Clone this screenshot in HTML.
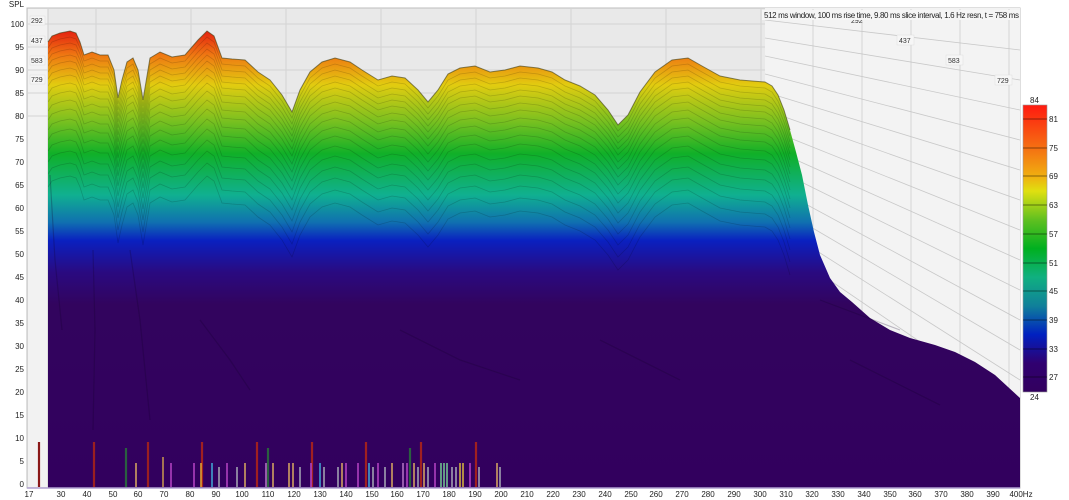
<!DOCTYPE html>
<html><head><meta charset="utf-8"><style>
html,body{margin:0;padding:0;background:#fff;}
svg{display:block;font-family:"Liberation Sans",sans-serif;}
</style></head><body>
<svg width="1069" height="500" viewBox="0 0 1069 500" xmlns="http://www.w3.org/2000/svg">
<defs>
<linearGradient id="sg" gradientUnits="userSpaceOnUse" x1="0" y1="30" x2="0" y2="488">
<stop offset="0" stop-color="#e41e10"/>
<stop offset="0.055" stop-color="#ef7812"/>
<stop offset="0.12" stop-color="#e2cc10"/>
<stop offset="0.2" stop-color="#78c020"/>
<stop offset="0.27" stop-color="#10b028"/>
<stop offset="0.36" stop-color="#10b090"/>
<stop offset="0.42" stop-color="#1070b0"/>
<stop offset="0.46" stop-color="#0a20c0"/>
<stop offset="0.53" stop-color="#2a0a80"/>
<stop offset="0.6" stop-color="#32045e"/>
<stop offset="1" stop-color="#32005e"/>
</linearGradient>
<linearGradient id="cb" x1="0" y1="0" x2="0" y2="1">
<stop offset="0" stop-color="#ff1a10"/>
<stop offset="0.15" stop-color="#f57012"/>
<stop offset="0.25" stop-color="#f0b010"/>
<stop offset="0.3" stop-color="#e0e010"/>
<stop offset="0.4" stop-color="#60c020"/>
<stop offset="0.5" stop-color="#00b020"/>
<stop offset="0.6" stop-color="#10b080"/>
<stop offset="0.7" stop-color="#10809a"/>
<stop offset="0.8" stop-color="#0020c0"/>
<stop offset="0.9" stop-color="#300070"/>
<stop offset="1" stop-color="#32005e"/>
</linearGradient>
<polyline id="sl" points="48,42 52,36 60,33 70,31 76,33 80,42 84,55 92,52 100,55 108,55 114,70 118,98 122,80 127,62 133,58 138,70 143,100 146,82 150,58 160,52 172,57 185,55 198,40 207,31 214,36 222,58 232,59 245,60 258,72 270,80 282,95 292,112 300,90 310,72 322,62 335,58 350,62 362,70 378,80 392,76 405,78 418,90 428,102 438,90 448,74 460,68 475,66 490,72 505,70 520,66 538,68 552,72 565,80 580,86 595,95 608,110 618,125 628,115 640,92 655,72 672,60 688,58 702,66 720,76 740,80 765,82 772,86 778,95 784,110 790,130"/>
<clipPath id="surf"><polygon points="48,42 52,36 60,33 70,31 76,33 80,42 84,55 92,52 100,55 108,55 114,70 118,98 122,80 127,62 133,58 138,70 143,100 146,82 150,58 160,52 172,57 185,55 198,40 207,31 214,36 222,58 232,59 245,60 258,72 270,80 282,95 292,112 300,90 310,72 322,62 335,58 350,62 362,70 378,80 392,76 405,78 418,90 428,102 438,90 448,74 460,68 475,66 490,72 505,70 520,66 538,68 552,72 565,80 580,86 595,95 608,110 618,125 628,115 640,92 655,72 672,60 688,58 702,66 720,76 740,80 765,82 772,86 778,95 784,110 790,130 796,152 802,175 808,205 814,232 820,255 830,278 840,292 852,302 870,318 890,330 910,338 935,345 955,352 975,362 995,375 1020,398 1020,488 48,488"/></clipPath>
</defs>
<rect width="1069" height="500" fill="#fff"/>
<rect x="27" y="8" width="993" height="480" fill="#e9e9e9" stroke="#bdbdbd"/>
<polygon points="765,8 1020,8 1020,488 765,488" fill="#f3f3f3"/>
<rect x="28" y="9" width="20" height="478" fill="#f2f2f2"/>
<g stroke="#d4d4d4" stroke-width="1">
<line x1="28" y1="24" x2="765" y2="24"/><line x1="28" y1="47" x2="765" y2="47"/><line x1="28" y1="70" x2="765" y2="70"/><line x1="28" y1="93" x2="765" y2="93"/><line x1="28" y1="116" x2="765" y2="116"/>
<line x1="96" y1="9" x2="96" y2="487"/><line x1="191" y1="9" x2="191" y2="487"/><line x1="286" y1="9" x2="286" y2="487"/><line x1="381" y1="9" x2="381" y2="487"/><line x1="476" y1="9" x2="476" y2="487"/><line x1="571" y1="9" x2="571" y2="487"/><line x1="666" y1="9" x2="666" y2="487"/><line x1="761" y1="9" x2="761" y2="487"/>
<line x1="813" y1="9" x2="813" y2="487"/><line x1="862" y1="9" x2="862" y2="487"/><line x1="911" y1="9" x2="911" y2="487"/><line x1="960" y1="9" x2="960" y2="487"/><line x1="1009" y1="9" x2="1009" y2="487"/>
</g>
<g stroke="#c8c8c8" stroke-width="0.8">
<line x1="765" y1="20" x2="1020" y2="50"/><line x1="765" y1="38" x2="1020" y2="80"/><line x1="765" y1="56" x2="1020" y2="110"/><line x1="765" y1="74" x2="1020" y2="140"/><line x1="765" y1="92" x2="1020" y2="170"/><line x1="765" y1="110" x2="1020" y2="200"/><line x1="765" y1="128" x2="1020" y2="230"/><line x1="765" y1="146" x2="1020" y2="260"/><line x1="765" y1="164" x2="1020" y2="290"/><line x1="765" y1="182" x2="1020" y2="320"/><line x1="765" y1="200" x2="1020" y2="350"/><line x1="765" y1="218" x2="1020" y2="380"/><line x1="765" y1="236" x2="1020" y2="410"/><line x1="765" y1="254" x2="1020" y2="440"/><line x1="765" y1="272" x2="1020" y2="470"/>
</g>
<line x1="48" y1="9" x2="48" y2="487" stroke="#cfcfcf"/>
<rect x="48" y="20" width="972" height="468" fill="url(#sg)" clip-path="url(#surf)"/>
<g clip-path="url(#surf)" fill="none" stroke="#000" stroke-opacity="0.16" stroke-width="0.8">
<use href="#sl" transform="translate(0,6)"/><use href="#sl" transform="translate(0,12)"/><use href="#sl" transform="translate(0,18)"/><use href="#sl" transform="translate(0,24)"/><use href="#sl" transform="translate(0,30)"/><use href="#sl" transform="translate(0,37)"/><use href="#sl" transform="translate(0,44)"/><use href="#sl" transform="translate(0,52)"/><use href="#sl" transform="translate(0,60)"/><use href="#sl" transform="translate(0,69)"/><use href="#sl" transform="translate(0,78)"/><use href="#sl" transform="translate(0,88)"/><use href="#sl" transform="translate(0,98)"/><use href="#sl" transform="translate(0,109)"/><use href="#sl" transform="translate(0,120)"/><use href="#sl" transform="translate(0,132)"/><use href="#sl" transform="translate(0,145)"/>
</g>
<use href="#sl" fill="none" stroke="#3a3a10" stroke-opacity="0.6" stroke-width="1"/>
<g stroke="#12002a" stroke-opacity="0.25" stroke-width="1.2" fill="none">
<path d="M50,175 L55,260 L62,330"/><path d="M93,250 L95,330 L93,430"/><path d="M130,250 L140,320 L150,420"/><path d="M200,320 L230,360 L250,390"/><path d="M400,330 L460,360 L520,380"/><path d="M600,340 L680,380"/><path d="M820,300 L900,330"/><path d="M850,360 L940,405"/>
</g>
<g stroke-width="2.2">
<line x1="39" y1="442" x2="39" y2="487" stroke="#8a1818"/>
<line x1="94" y1="442" x2="94" y2="487" stroke="#9a2020"/><line x1="148" y1="442" x2="148" y2="487" stroke="#9a2020"/><line x1="202" y1="442" x2="202" y2="487" stroke="#a02020"/><line x1="257" y1="442" x2="257" y2="487" stroke="#a02020"/><line x1="312" y1="442" x2="312" y2="487" stroke="#a02020"/><line x1="366" y1="442" x2="366" y2="487" stroke="#a02020"/><line x1="421" y1="442" x2="421" y2="487" stroke="#a02020"/><line x1="476" y1="442" x2="476" y2="487" stroke="#a02020"/>
<line x1="126" y1="448" x2="126" y2="487" stroke="#2a6040"/><line x1="268" y1="448" x2="268" y2="487" stroke="#2a6040"/><line x1="410" y1="448" x2="410" y2="487" stroke="#2a6040"/>
</g>
<g stroke-width="1.6">
<line x1="136" y1="463" x2="136" y2="487" stroke="#d0a060"/><line x1="163" y1="457" x2="163" y2="487" stroke="#c09050"/><line x1="171" y1="463" x2="171" y2="487" stroke="#b040c0"/><line x1="194" y1="463" x2="194" y2="487" stroke="#b040c0"/><line x1="201" y1="463" x2="201" y2="487" stroke="#e0a030"/><line x1="212" y1="463" x2="212" y2="487" stroke="#40a0d0"/><line x1="219" y1="467" x2="219" y2="487" stroke="#a0a0b0"/><line x1="227" y1="463" x2="227" y2="487" stroke="#b040c0"/><line x1="237" y1="467" x2="237" y2="487" stroke="#a0a0b0"/><line x1="245" y1="463" x2="245" y2="487" stroke="#d0a060"/><line x1="266" y1="463" x2="266" y2="487" stroke="#b070c0"/><line x1="273" y1="463" x2="273" y2="487" stroke="#d0a060"/><line x1="289" y1="463" x2="289" y2="487" stroke="#d0a060"/><line x1="293" y1="463" x2="293" y2="487" stroke="#d0a060"/><line x1="300" y1="467" x2="300" y2="487" stroke="#a0a0b0"/><line x1="311" y1="463" x2="311" y2="487" stroke="#b040c0"/><line x1="320" y1="463" x2="320" y2="487" stroke="#40a0d0"/><line x1="324" y1="467" x2="324" y2="487" stroke="#a0a0b0"/><line x1="338" y1="467" x2="338" y2="487" stroke="#a0a0b0"/><line x1="342" y1="463" x2="342" y2="487" stroke="#d0a060"/><line x1="346" y1="463" x2="346" y2="487" stroke="#b040c0"/><line x1="358" y1="463" x2="358" y2="487" stroke="#b040c0"/><line x1="369" y1="463" x2="369" y2="487" stroke="#40a0d0"/><line x1="373" y1="467" x2="373" y2="487" stroke="#a0a0b0"/><line x1="378" y1="463" x2="378" y2="487" stroke="#b040c0"/><line x1="385" y1="467" x2="385" y2="487" stroke="#a0a0b0"/><line x1="392" y1="463" x2="392" y2="487" stroke="#d0a060"/><line x1="403" y1="463" x2="403" y2="487" stroke="#b070c0"/><line x1="407" y1="463" x2="407" y2="487" stroke="#b040c0"/><line x1="414" y1="463" x2="414" y2="487" stroke="#d0a060"/><line x1="418" y1="467" x2="418" y2="487" stroke="#a0a0b0"/><line x1="424" y1="463" x2="424" y2="487" stroke="#d0a060"/><line x1="428" y1="467" x2="428" y2="487" stroke="#a0a0b0"/><line x1="435" y1="463" x2="435" y2="487" stroke="#b040c0"/><line x1="441" y1="463" x2="441" y2="487" stroke="#70c090"/><line x1="444" y1="463" x2="444" y2="487" stroke="#70c090"/><line x1="447" y1="463" x2="447" y2="487" stroke="#70c090"/><line x1="452" y1="467" x2="452" y2="487" stroke="#a0a0b0"/><line x1="456" y1="467" x2="456" y2="487" stroke="#a0a0b0"/><line x1="460" y1="463" x2="460" y2="487" stroke="#d0b040"/><line x1="463" y1="463" x2="463" y2="487" stroke="#d0b040"/><line x1="470" y1="463" x2="470" y2="487" stroke="#b040c0"/><line x1="479" y1="467" x2="479" y2="487" stroke="#a0a0b0"/><line x1="497" y1="463" x2="497" y2="487" stroke="#d0a060"/><line x1="500" y1="467" x2="500" y2="487" stroke="#a0a0b0"/>
</g>
<line x1="27" y1="488" x2="1020" y2="488" stroke="#b0a0d0" stroke-width="1.5"/>
<g font-size="8" fill="#222" text-anchor="end">
<text x="24" y="7">SPL</text>
<text x="24" y="27">100</text><text x="24" y="50">95</text><text x="24" y="73">90</text><text x="24" y="96">85</text><text x="24" y="119">80</text><text x="24" y="142">75</text><text x="24" y="165">70</text><text x="24" y="188">65</text><text x="24" y="211">60</text><text x="24" y="234">55</text><text x="24" y="257">50</text><text x="24" y="280">45</text><text x="24" y="303">40</text><text x="24" y="326">35</text><text x="24" y="349">30</text><text x="24" y="372">25</text><text x="24" y="395">20</text><text x="24" y="418">15</text><text x="24" y="441">10</text><text x="24" y="464">5</text><text x="24" y="487">0</text>
</g>
<g font-size="7" fill="#333">
<rect x="30" y="16" width="15" height="9" fill="#f6f6f6" stroke="#ddd" stroke-width="0.5"/><text x="31" y="23">292</text>
<rect x="30" y="36" width="15" height="9" fill="#f6f6f6" stroke="#ddd" stroke-width="0.5"/><text x="31" y="43">437</text>
<rect x="30" y="56" width="15" height="9" fill="#f6f6f6" stroke="#ddd" stroke-width="0.5"/><text x="31" y="63">583</text>
<rect x="30" y="75" width="15" height="9" fill="#f6f6f6" stroke="#ddd" stroke-width="0.5"/><text x="31" y="82">729</text>
<text x="851" y="23">292</text>
<rect x="897" y="35" width="17" height="10" fill="#f6f6f6" stroke="#ddd" stroke-width="0.5"/><text x="899" y="43">437</text>
<rect x="946" y="55" width="17" height="10" fill="#f6f6f6" stroke="#ddd" stroke-width="0.5"/><text x="948" y="63">583</text>
<rect x="995" y="75" width="17" height="10" fill="#f6f6f6" stroke="#ddd" stroke-width="0.5"/><text x="997" y="83">729</text>
</g>
<rect x="762" y="10" width="258" height="10" fill="#f6f6f6"/>
<text x="764" y="18" font-size="8" fill="#222" textLength="255">512 ms window, 100 ms rise time, 9.80 ms slice interval, 1.6 Hz resn, t = 758 ms</text>
<g font-size="8" fill="#222" text-anchor="middle">
<text x="29" y="497">17</text><text x="61" y="497">30</text><text x="87" y="497">40</text><text x="113" y="497">50</text><text x="138" y="497">60</text><text x="164" y="497">70</text><text x="190" y="497">80</text><text x="216" y="497">90</text><text x="242" y="497">100</text><text x="268" y="497">110</text><text x="294" y="497">120</text><text x="320" y="497">130</text><text x="346" y="497">140</text><text x="372" y="497">150</text><text x="397" y="497">160</text><text x="423" y="497">170</text><text x="449" y="497">180</text><text x="475" y="497">190</text><text x="501" y="497">200</text><text x="527" y="497">210</text><text x="553" y="497">220</text><text x="579" y="497">230</text><text x="605" y="497">240</text><text x="631" y="497">250</text><text x="656" y="497">260</text><text x="682" y="497">270</text><text x="708" y="497">280</text><text x="734" y="497">290</text><text x="760" y="497">300</text><text x="786" y="497">310</text><text x="812" y="497">320</text><text x="838" y="497">330</text><text x="864" y="497">340</text><text x="890" y="497">350</text><text x="915" y="497">360</text><text x="941" y="497">370</text><text x="967" y="497">380</text><text x="993" y="497">390</text><text x="1021" y="497">400Hz</text>
</g>
<rect x="1023" y="105" width="24" height="287" fill="url(#cb)" stroke="#999" stroke-width="0.6"/>
<g stroke="#000" stroke-opacity="0.45" stroke-width="1">
<line x1="1023" y1="119" x2="1047" y2="119"/><line x1="1023" y1="148" x2="1047" y2="148"/><line x1="1023" y1="176" x2="1047" y2="176"/><line x1="1023" y1="205" x2="1047" y2="205"/><line x1="1023" y1="234" x2="1047" y2="234"/><line x1="1023" y1="263" x2="1047" y2="263"/><line x1="1023" y1="291" x2="1047" y2="291"/><line x1="1023" y1="320" x2="1047" y2="320"/><line x1="1023" y1="349" x2="1047" y2="349"/><line x1="1023" y1="377" x2="1047" y2="377"/>
</g>
<g font-size="8" fill="#222">
<text x="1030" y="103">84</text><text x="1049" y="122">81</text><text x="1049" y="151">75</text><text x="1049" y="179">69</text><text x="1049" y="208">63</text><text x="1049" y="237">57</text><text x="1049" y="266">51</text><text x="1049" y="294">45</text><text x="1049" y="323">39</text><text x="1049" y="352">33</text><text x="1049" y="380">27</text><text x="1030" y="400">24</text>
</g>
</svg>
</body></html>
